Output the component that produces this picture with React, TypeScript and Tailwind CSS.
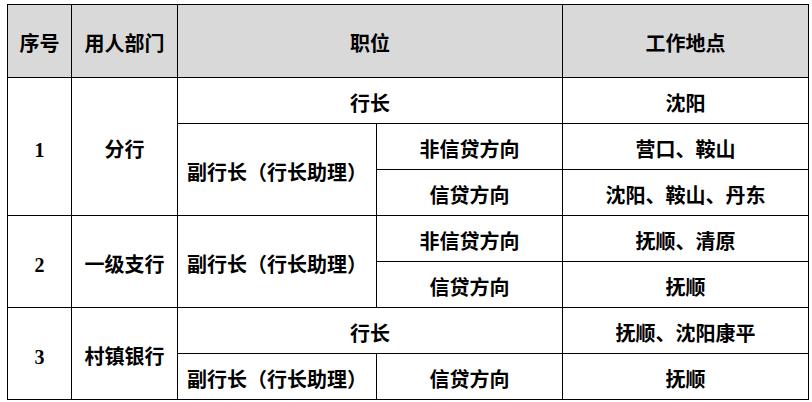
const cell = "border border-black text-center align-middle pt-[6px] pb-0";
const left = "border border-black text-left align-middle pt-[6px] pb-0 pl-[9px]";

export default function App() {
  return (
    <div
      className="min-h-[402px] w-[812px] bg-white pl-[7px] pt-[4px] text-[20px] font-semibold leading-none text-black"
      style={{ fontFamily: '"Liberation Serif", "Noto Sans CJK SC", serif' }}
    >
      <table className="table-fixed border-collapse">
        <colgroup>
          <col className="w-[64px]" />
          <col className="w-[106px]" />
          <col className="w-[199px]" />
          <col className="w-[186px]" />
          <col className="w-[246px]" />
        </colgroup>
        <thead>
          <tr className="h-[73px] bg-[#d9d9d9]">
            <th className={cell}>序号</th>
            <th className={cell}>用人部门</th>
            <th className={cell} colSpan={2}>
              职位
            </th>
            <th className={cell}>工作地点</th>
          </tr>
        </thead>
        <tbody>
          <tr className="h-[46px]">
            <td className={cell} rowSpan={3}>1</td>
            <td className={cell} rowSpan={3}>分行</td>
            <td className={cell} colSpan={2}>行长</td>
            <td className={cell}>沈阳</td>
          </tr>
          <tr className="h-[46px]">
            <td className={left} rowSpan={2}>副行长（行长助理）</td>
            <td className={cell}>非信贷方向</td>
            <td className={cell}>营口、鞍山</td>
          </tr>
          <tr className="h-[46px]">
            <td className={cell}>信贷方向</td>
            <td className={cell}>沈阳、鞍山、丹东</td>
          </tr>
          <tr className="h-[46px]">
            <td className={cell} rowSpan={2}>2</td>
            <td className={cell} rowSpan={2}>一级支行</td>
            <td className={left} rowSpan={2}>副行长（行长助理）</td>
            <td className={cell}>非信贷方向</td>
            <td className={cell}>抚顺、清原</td>
          </tr>
          <tr className="h-[46px]">
            <td className={cell}>信贷方向</td>
            <td className={cell}>抚顺</td>
          </tr>
          <tr className="h-[46px]">
            <td className={cell} rowSpan={2}>3</td>
            <td className={cell} rowSpan={2}>村镇银行</td>
            <td className={cell} colSpan={2}>行长</td>
            <td className={cell}>抚顺、沈阳康平</td>
          </tr>
          <tr className="h-[46px]">
            <td className={left}>副行长（行长助理）</td>
            <td className={cell}>信贷方向</td>
            <td className={cell}>抚顺</td>
          </tr>
        </tbody>
      </table>
    </div>
  );
}
